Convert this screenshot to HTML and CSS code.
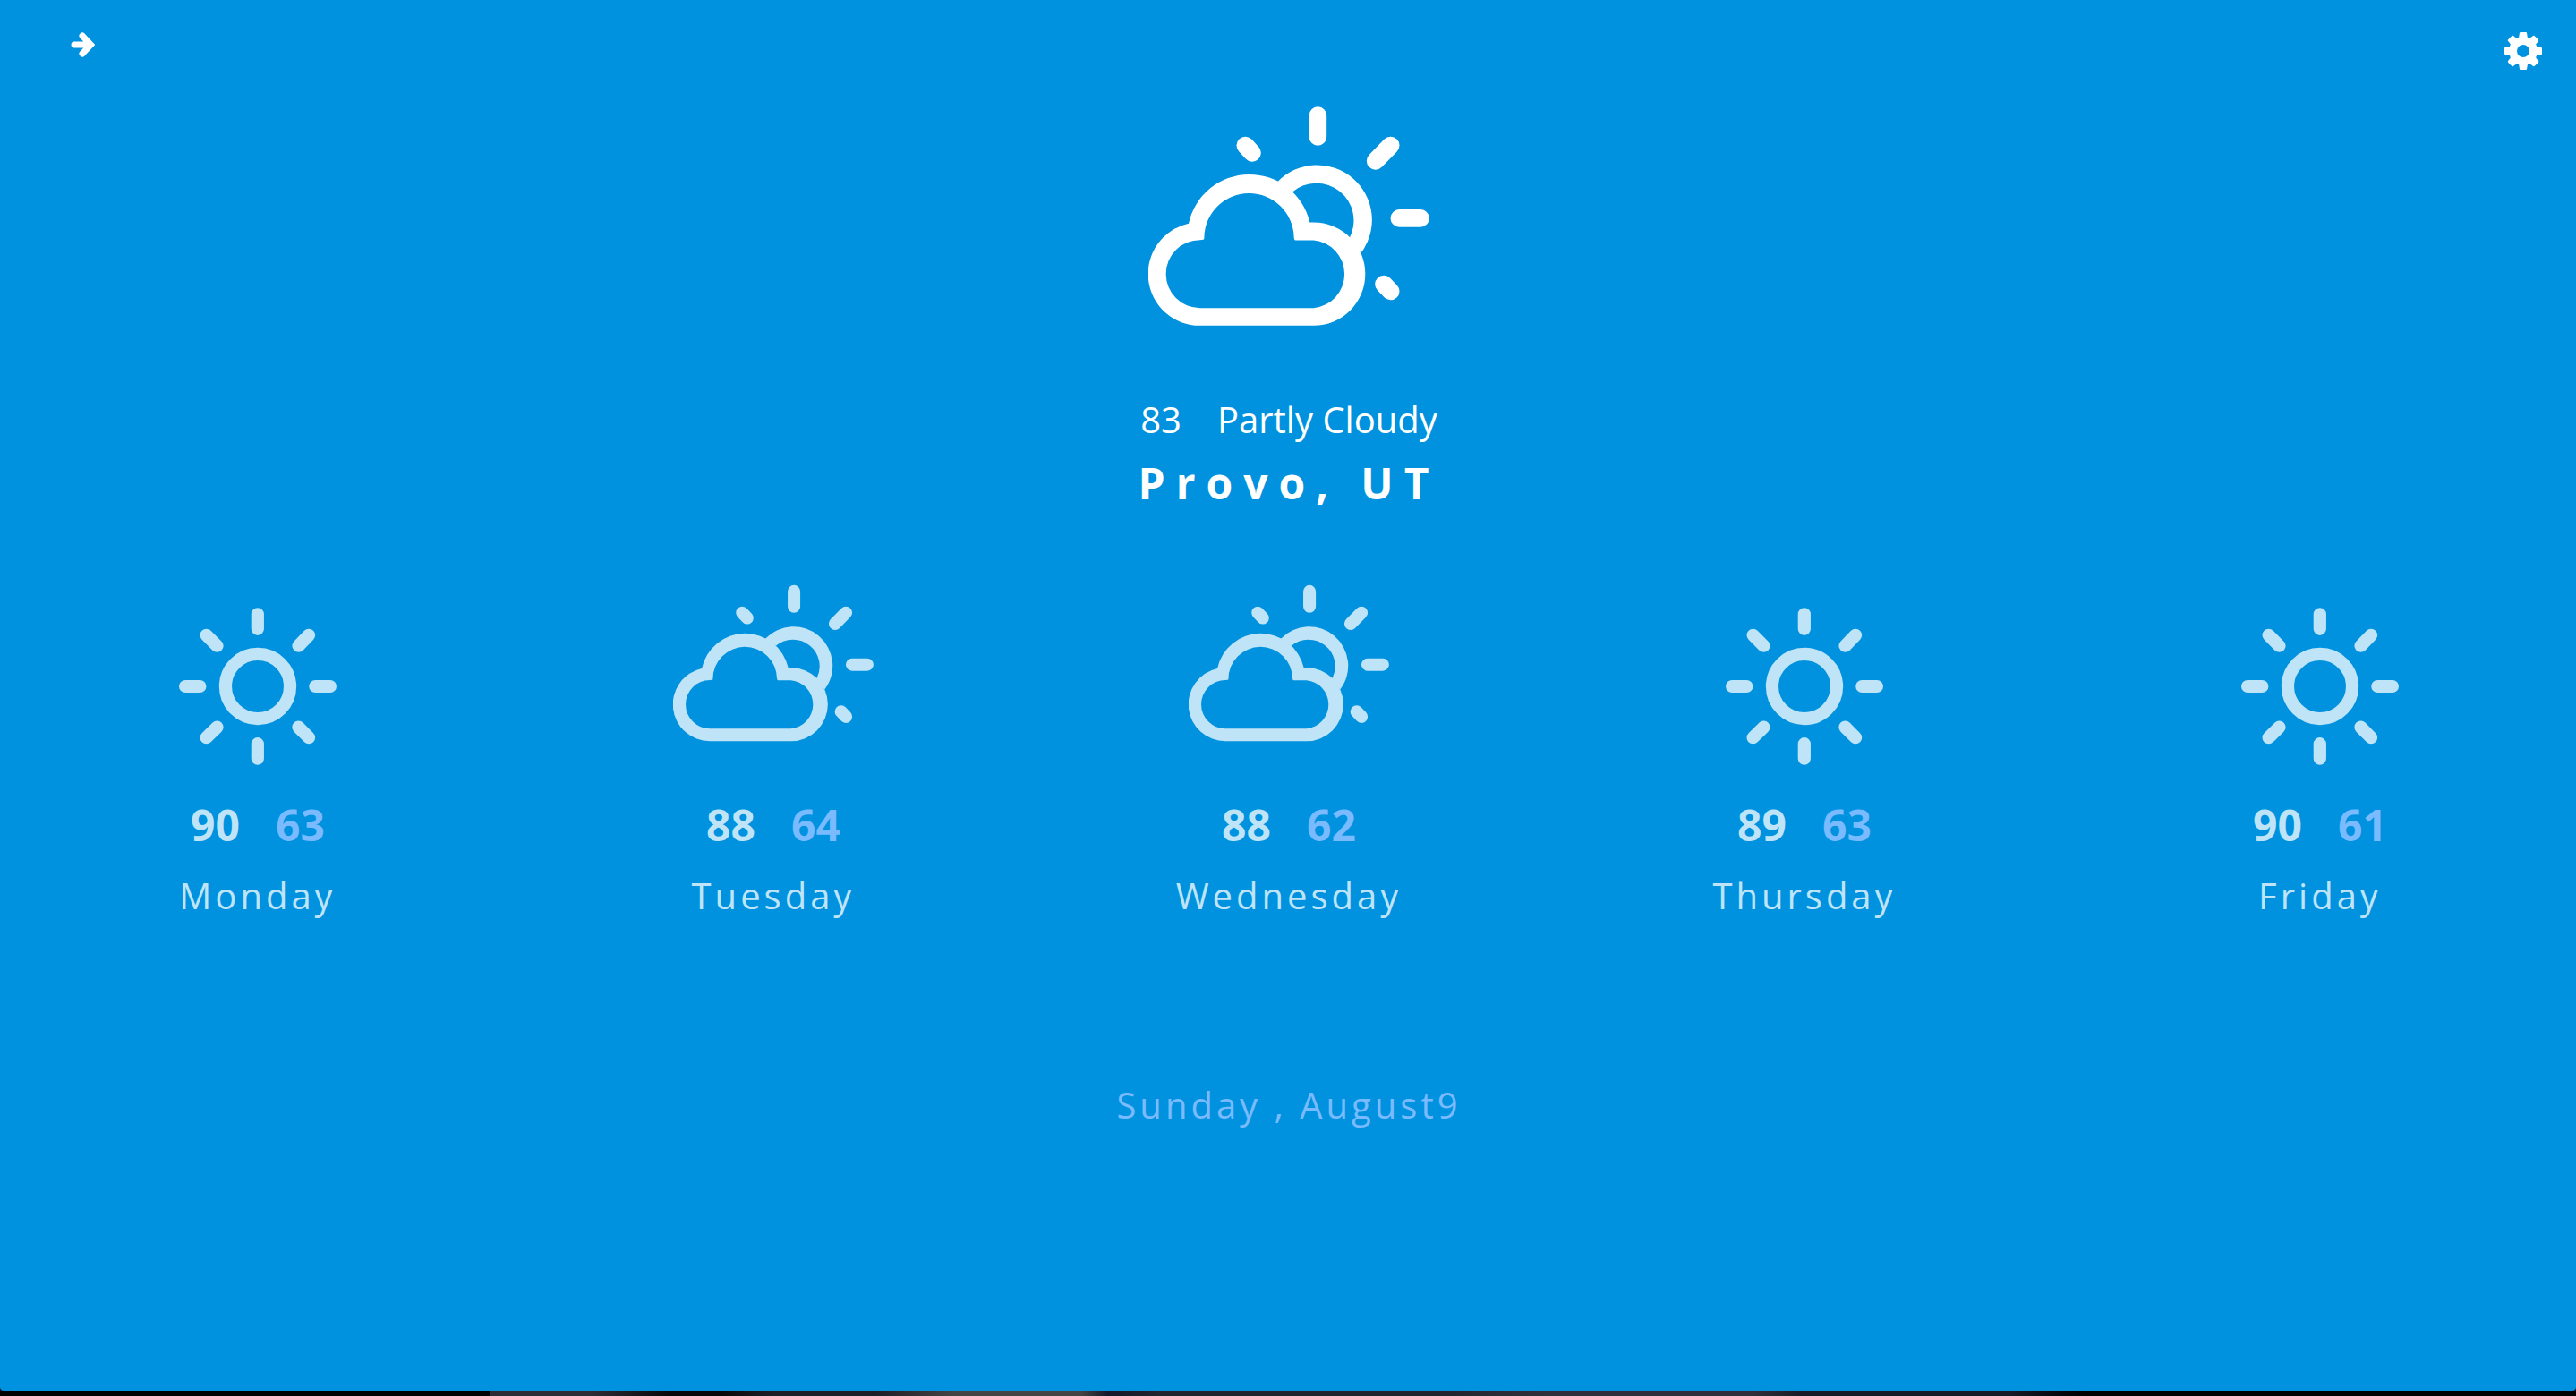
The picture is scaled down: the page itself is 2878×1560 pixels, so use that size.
FILE: index.html
```html
<!DOCTYPE html>
<html lang="en">
<head>
<meta charset="utf-8">
<title>Weather</title>
<link rel="stylesheet" href="styles.css">
</head>
<body>
<svg class="sprite" aria-hidden="true">
  <symbol id="cloud-sun" viewBox="69 58 942 734">
    <path fill="currentColor" fill-rule="evenodd" d="M242 792A173 173 0 0 1 204 450A208 208 0 0 1 610 446H623A173 173 0 0 1 623 792ZM242 733A114 114 0 0 1 242 505L252 504Q256 504 256 500A150 150 0 0 1 557 498L558 502Q559 506 563 506H623A114 114 0 0 1 623 733Z"/>
    <path fill="currentColor" d="M502 310A184 184 0 0 1 781 549L744 496A125 125 0 0 0 552 344Z"/>
    <path fill="none" stroke="currentColor" stroke-width="59" stroke-linecap="round" d="M637 88V159M881 188L830 240M910 432H981M858 653L881 677M394 188L417 213"/>
  </symbol>
  <symbol id="sun" viewBox="58 57 533 532">
    <circle cx="324.500" cy="323" r="109" fill="none" stroke="currentColor" stroke-width="43"/>
    <path fill="none" stroke="currentColor" stroke-width="43" stroke-linecap="round" d="M324 79V129M324 517V567M80 323H129M519 323H569M151 150L187 186M497 150L462 186M151 496L187 461M497 496L462 461"/>
  </symbol>
</svg>
<main class="weather">
  <header class="bar">
    <button class="icon-button" aria-label="Next">
      <svg class="arrow" viewBox="0 0 26 28"><path d="M3.500 14H20M12.500 4L22 14L12.500 24" fill="none" stroke="currentColor" stroke-width="7" stroke-linecap="round" stroke-linejoin="miter"/></svg>
    </button>
    <button class="icon-button" aria-label="Settings">
      <svg class="gear" viewBox="0 0 1536 1536"><path fill="currentColor" d="M1024 768q0-106-75-181t-181-75-181 75-75 181 75 181 181 75 181-75 75-181zm512-109v222q0 12-8 23t-20 13l-185 28q-19 54-39 91 35 50 107 138 10 12 10 25t-9 23q-27 37-99 108t-94 71q-12 0-26-9l-138-108q-44 23-91 38-16 136-29 186-7 28-36 28h-222q-14 0-24.500-8.500t-11.500-21.500l-28-184q-49-16-90-37l-141 107q-10 9-25 9-14 0-25-11-126-114-165-168-7-10-7-23 0-12 8-23 15-21 51-66.500t54-70.500q-27-50-41-99l-183-27q-13-2-21-12.500t-8-23.500v-222q0-12 8-23t19-13l186-28q14-46 39-92-40-57-107-138-10-12-10-24 0-10 9-23 26-36 98.500-107.500t94.500-71.500q13 0 26 10l138 107q44-23 91-38 16-136 29-186 7-28 36-28h222q14 0 24.500 8.500t11.500 21.500l28 184q49 16 90 37l142-107q9-9 24-9 13 0 25 10 129 119 165 170 7 8 7 22 0 12-8 23-15 21-51 66.500t-54 70.500q26 50 41 98l183 28q13 2 21 12.500t8 23.500z"/></svg>
    </button>
  </header>
  <section class="current">
    <svg class="current-icon" role="img" aria-label="Partly cloudy"><use href="#cloud-sun"/></svg>
    <p class="conditions"><span>83</span><span>Partly Cloudy</span></p>
    <h1 class="place">Provo, UT</h1>
  </section>
  <ol class="forecast">
    <li class="day"><svg class="day-icon sun" role="img" aria-label="Sunny"><use href="#sun"/></svg><p class="temps"><span>90</span><span class="low">63</span></p><p class="name">Monday</p></li>
    <li class="day"><svg class="day-icon cloud" role="img" aria-label="Partly cloudy"><use href="#cloud-sun"/></svg><p class="temps"><span>88</span><span class="low">64</span></p><p class="name">Tuesday</p></li>
    <li class="day"><svg class="day-icon cloud" role="img" aria-label="Partly cloudy"><use href="#cloud-sun"/></svg><p class="temps"><span>88</span><span class="low">62</span></p><p class="name">Wednesday</p></li>
    <li class="day"><svg class="day-icon sun" role="img" aria-label="Sunny"><use href="#sun"/></svg><p class="temps"><span>89</span><span class="low">63</span></p><p class="name">Thursday</p></li>
    <li class="day"><svg class="day-icon sun" role="img" aria-label="Sunny"><use href="#sun"/></svg><p class="temps"><span>90</span><span class="low">61</span></p><p class="name">Friday</p></li>
  </ol>
  <p class="date">Sunday , August9</p>
</main>
</body>
</html>
```
FILE: styles.css
```css
* { box-sizing: border-box; margin: 0; padding: 0; }

body {
  display: flex;
  flex-direction: column;
  min-height: 100vh;
  padding-bottom: 6px;
  background: linear-gradient(90deg, #000 0 19%, #2c2c34 19% 23%, #08080a 26% 28%, #1e1e26 30% 34%, #444 37% 42%, #14182a 43%, #22242e 45% 56%, #30303a 60% 68%, #181c26 70% 78%, #04060c 80%, #000 81%);
  font-family: "Open Sans", sans-serif;
  font-size: 40px;
  line-height: 56px;
}

.sprite { position: absolute; width: 0; height: 0; }

.weather {
  flex: 1;
  overflow-x: hidden;
  background: #0092df;
  border-radius: 0 0 4px 4px;
  color: #fff;
}

.bar {
  display: flex;
  justify-content: space-between;
  align-items: flex-start;
  padding: 36px 38px 0 79px;
}

.icon-button {
  display: block;
  border: 0;
  background: none;
  color: inherit;
  cursor: pointer;
}

.icon-button svg { display: block; }
.arrow { width: 27px; height: 28px; }
.gear { width: 42px; height: 42px; }

.current, .forecast, .date { margin-right: -2px; }

.current {
  display: flex;
  flex-direction: column;
  align-items: center;
  padding-top: 41px;
}

.current-icon { width: 314px; height: 245px; }

.conditions {
  display: flex;
  gap: 40px;
  margin-top: 77px;
}

.place {
  margin-top: 15px;
  font-size: 48px;
  font-weight: 700;
  letter-spacing: 12px;
}

.forecast {
  display: grid;
  grid-template-columns: repeat(5, 1fr);
  margin-top: 85px;
  list-style: none;
  color: #bfe4f7;
}

.day {
  display: flex;
  flex-direction: column;
  align-items: center;
}

.day-icon { height: 176px; }
.cloud { width: 224px; margin-bottom: 28px; }
.sun { width: 178px; margin-top: 26px; margin-bottom: 2px; }

.temps {
  display: flex;
  gap: 40px;
  margin-top: 37px;
  font-size: 48px;
  font-weight: 700;
}

.low, .date { color: #7abaff; }

.name {
  margin-top: 23px;
  letter-spacing: 4px;
}

.date {
  margin-top: 178px;
  letter-spacing: 4px;
  text-align: center;
}
```
